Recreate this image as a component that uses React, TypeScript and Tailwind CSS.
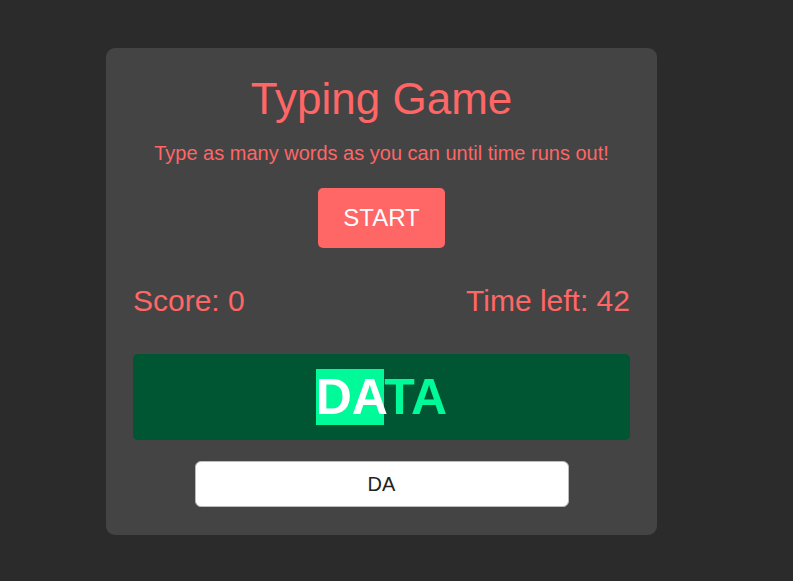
import React, { useState } from "react";

const word = "DATA";

export default function App() {
    const [typed, setTyped] = useState("DA");

    const done = word.slice(0, typed.length);
    const rest = word.slice(typed.length);

    return (
        <div
            className="min-h-[581px] bg-[#2b2b2b] pt-[48px] pl-[106px]"
            style={{ fontFamily: '"Liberation Sans", Arial, sans-serif' }}
        >
            <div className="w-[551px] rounded-[9px] bg-[#444444] px-[27px] pt-[25px] pb-[28px] flex flex-col items-center">
                <h1 className="text-[44px] leading-[51px] text-[#ff6666]">Typing Game</h1>
                <p className="mt-[18px] text-[20px] leading-[23px] text-[#ff6666]">
                    Type as many words as you can until time runs out!
                </p>
                <button
                    type="button"
                    className="mt-[23px] w-[127px] h-[60px] rounded-[5px] bg-[#ff6666] text-white text-[24px]"
                >
                    START
                </button>

                <div className="mt-[36px] w-full flex justify-between text-[30px] leading-[34px] text-[#ff6666]">
                    <span>Score: 0</span>
                    <span>Time left: 42</span>
                </div>

                <div className="mt-[36px] w-full h-[86px] rounded-[5px] bg-[#005533] flex items-center justify-center">
                    <div className="text-[50px] leading-[55px] font-bold text-[#00fa9a]">
                        <span className="bg-[#00fa9a] text-white">{done}</span>
                        <span>{rest}</span>
                    </div>
                </div>

                <input
                    value={typed}
                    onChange={(e) => setTyped(e.target.value.toUpperCase())}
                    className="mt-[21px] w-[374px] h-[46px] rounded-[6px] border border-[#bbbbbb] bg-white text-center text-[20px] text-[#222222] outline-none"
                />
            </div>
        </div>
    );
}
